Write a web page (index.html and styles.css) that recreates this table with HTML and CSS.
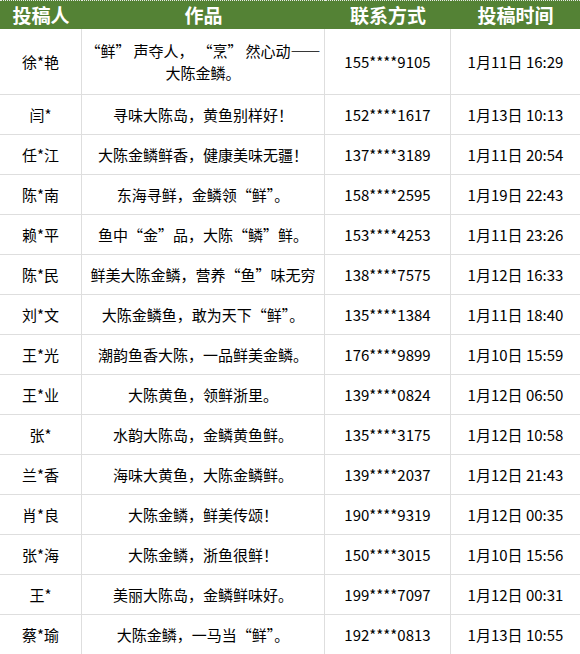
FILE: index.html
```html
<!DOCTYPE html>
<html lang="zh-CN">
<head>
<meta charset="utf-8">
<link rel="stylesheet" href="styles.css">
</head>
<body>
<div class="sheet">
  <div class="head">投稿人</div><div class="head">作品</div><div class="head">联系方式</div><div class="head">投稿时间</div>

  <div class="cell tall">徐*艳</div><div class="cell tall"><div>“鲜”<span class="sp1"></span>声夺人，<span class="sp2"></span>“烹”<span class="sp1"></span>然心动——<br>大陈金鳞。</div></div><div class="cell tall">155****9105</div><div class="cell tall">1月11日 16:29</div>
  <div class="cell">闫*</div><div class="cell">寻味大陈岛，黄鱼别样好！</div><div class="cell">152****1617</div><div class="cell">1月13日 10:13</div>
  <div class="cell">任*江</div><div class="cell">大陈金鳞鲜香，健康美味无疆！</div><div class="cell">137****3189</div><div class="cell">1月11日 20:54</div>
  <div class="cell">陈*南</div><div class="cell">东海寻鲜，金鳞领“鲜”。</div><div class="cell">158****2595</div><div class="cell">1月19日 22:43</div>
  <div class="cell">赖*平</div><div class="cell">鱼中“金”品，大陈“鳞”鲜。</div><div class="cell">153****4253</div><div class="cell">1月11日 23:26</div>
  <div class="cell">陈*民</div><div class="cell">鲜美大陈金鳞，营养“鱼”味无穷</div><div class="cell">138****7575</div><div class="cell">1月12日 16:33</div>
  <div class="cell">刘*文</div><div class="cell">大陈金鳞鱼，敢为天下“鲜”。</div><div class="cell">135****1384</div><div class="cell">1月11日 18:40</div>
  <div class="cell">王*光</div><div class="cell">潮韵鱼香大陈，一品鲜美金鳞。</div><div class="cell">176****9899</div><div class="cell">1月10日 15:59</div>
  <div class="cell">王*业</div><div class="cell">大陈黄鱼，领鲜浙里。</div><div class="cell">139****0824</div><div class="cell">1月12日 06:50</div>
  <div class="cell">张*</div><div class="cell">水韵大陈岛，金鳞黄鱼鲜。</div><div class="cell">135****3175</div><div class="cell">1月12日 10:58</div>
  <div class="cell">兰*香</div><div class="cell">海味大黄鱼，大陈金鳞鲜。</div><div class="cell">139****2037</div><div class="cell">1月12日 21:43</div>
  <div class="cell">肖*良</div><div class="cell">大陈金鳞，鲜美传颂！</div><div class="cell">190****9319</div><div class="cell">1月12日 00:35</div>
  <div class="cell">张*海</div><div class="cell">大陈金鳞，浙鱼很鲜！</div><div class="cell">150****3015</div><div class="cell">1月10日 15:56</div>
  <div class="cell">王*</div><div class="cell">美丽大陈岛，金鳞鲜味好。</div><div class="cell">199****7097</div><div class="cell">1月12日 00:31</div>
  <div class="cell">蔡*瑜</div><div class="cell">大陈金鳞，一马当“鲜”。</div><div class="cell">192****0813</div><div class="cell">1月13日 10:55</div>
</div>
</body>
</html>
```

FILE: styles.css
```css
html, body {
  margin: 0;
  padding: 0;
  background: #ffffff;
}

body {
  font-family: "Noto Sans CJK SC", "Noto Sans", sans-serif;
  color: #000000;
  overflow: hidden;
}

.sheet {
  display: grid;
  grid-template-columns: 82px 243px 126px 129px;
  width: 580px;
}

.head {
  box-sizing: border-box;
  height: 29px;
  background: #548235;
  border-top: 1px dotted #e8e8e8;
  color: #ffffff;
  font-weight: 700;
  font-size: 19px;
  line-height: 27px;
  text-align: center;
}

.cell {
  box-sizing: border-box;
  height: 40px;
  border-right: 1px solid #dedede;
  border-bottom: 1px solid #dedede;
  font-size: 15px;
  line-height: 22px;
  display: flex;
  align-items: center;
  justify-content: center;
  text-align: center;
  white-space: nowrap;
}

.cell:nth-child(4n) {
  border-right: none;
}

.cell.tall {
  height: 66px;
}

.sp1 {
  display: inline-block;
  width: 3px;
}

.sp2 {
  display: inline-block;
  width: 4px;
}
```
